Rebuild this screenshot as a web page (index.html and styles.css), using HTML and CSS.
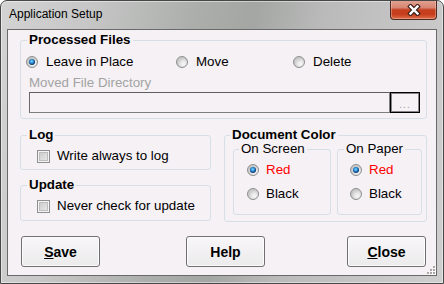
FILE: index.html
```html
<!DOCTYPE html>
<html>
<head>
<meta charset="utf-8">
<link rel="stylesheet" href="styles.css">
</head>
<body>
<div class="window">
  <div class="titlebar">
    <span class="title">Application Setup</span>
    <div class="close-btn">
      <svg width="14" height="12" viewBox="0 0 14 12">
        <path d="M3.5 2.5 L10.5 9.5 M10.5 2.5 L3.5 9.5" stroke="#3b1f1a" stroke-width="4.6" stroke-linecap="square"/>
        <path d="M3.5 2.5 L10.5 9.5 M10.5 2.5 L3.5 9.5" stroke="#ffffff" stroke-width="2.4" stroke-linecap="square"/>
      </svg>
    </div>
  </div>
  <div class="client">
    <fieldset class="group processed">
      <legend>Processed Files</legend>
      <div class="pf-body">
        <div class="radio-row">
          <div class="opt opt-leave"><span class="radio checked"></span><span>Leave in Place</span></div>
          <div class="opt opt-move"><span class="radio"></span><span>Move</span></div>
          <div class="opt"><span class="radio"></span><span>Delete</span></div>
        </div>
        <div class="dir-label">Moved File Directory</div>
        <div class="dir-row">
          <div class="dir-input"></div>
          <div class="dir-btn"><span class="dots">...</span></div>
        </div>
      </div>
    </fieldset>

    <div class="columns">
      <div class="left-col">
        <fieldset class="group log">
          <legend>Log</legend>
          <div class="check-body">
            <div class="opt"><span class="checkbox"></span><span>Write always to log</span></div>
          </div>
        </fieldset>
        <fieldset class="group update">
          <legend>Update</legend>
          <div class="check-body update-body">
            <div class="opt"><span class="checkbox"></span><span>Never check for update</span></div>
          </div>
        </fieldset>
      </div>

      <fieldset class="group doc">
        <legend>Document Color</legend>
        <div class="doc-body">
          <fieldset class="group sub sub-screen">
            <legend>On Screen</legend>
            <div class="sub-body">
              <div class="opt"><span class="radio checked"></span><span class="red">Red</span></div>
              <div class="opt"><span class="radio"></span><span>Black</span></div>
            </div>
          </fieldset>
          <fieldset class="group sub sub-paper">
            <legend>On Paper</legend>
            <div class="sub-body">
              <div class="opt"><span class="radio checked"></span><span class="red">Red</span></div>
              <div class="opt"><span class="radio"></span><span>Black</span></div>
            </div>
          </fieldset>
        </div>
      </fieldset>
    </div>

    <div class="buttons">
      <div class="btn btn-save"><span><u>S</u>ave</span></div>
      <div class="btn btn-help"><span>Help</span></div>
      <div class="btn btn-close"><span><u>C</u>lose</span></div>
    </div>

    <svg class="grip" width="10" height="10" viewBox="0 0 10 10">
      <g fill="#ffffff">
        <rect x="8" y="2" width="2" height="2"/><rect x="5" y="5" width="2" height="2"/><rect x="8" y="5" width="2" height="2"/>
        <rect x="2" y="8" width="2" height="2"/><rect x="5" y="8" width="2" height="2"/><rect x="8" y="8" width="2" height="2"/>
      </g>
      <g fill="#a8a8a8">
        <rect x="7" y="1" width="2" height="2"/><rect x="4" y="4" width="2" height="2"/><rect x="7" y="4" width="2" height="2"/>
        <rect x="1" y="7" width="2" height="2"/><rect x="4" y="7" width="2" height="2"/><rect x="7" y="7" width="2" height="2"/>
      </g>
    </svg>
  </div>
</div>
</body>
</html>
```

FILE: styles.css
```css
html, body {
  margin: 0;
  padding: 0;
  background: #ffffff;
}

body {
  font-family: "Liberation Sans", Arial, sans-serif;
  font-size: 13.33px;
  color: #000;
}

.window {
  width: 444px;
  height: 284px;
  box-sizing: border-box;
  border: 1px solid #474747;
  border-radius: 7px 7px 0 0;
  display: flex;
  flex-direction: column;
  background: linear-gradient(100deg, #d3d3d3 0%, #c6c7c6 18%, #acaeac 40%, #a4a6a4 52%, #b9bab9 66%, #c2c3c2 80%, #cfcfcf 100%);
  box-shadow: inset 0 0 0 1px rgba(255, 255, 255, 0.45);
  overflow: hidden;
}

.titlebar {
  height: 28px;
  flex: none;
  display: flex;
  align-items: flex-start;
}

.title {
  font-size: 12px;
  line-height: 14px;
  padding: 6px 0 0 8px;
  color: #000;
}

.close-btn {
  margin-left: auto;
  margin-right: 6px;
  margin-top: -1px;
  width: 47px;
  height: 20px;
  box-sizing: border-box;
  border: 1px solid #4f2a22;
  border-top: none;
  border-radius: 0 0 4px 4px;
  background: linear-gradient(#e2a494 0%, #d78572 40%, #c5401f 52%, #c63d1c 75%, #dc6f4a 100%);
  box-shadow: inset 0 0 0 1px rgba(255, 220, 210, 0.35);
  display: flex;
  align-items: center;
  justify-content: center;
}

.client {
  position: relative;
  flex: 1;
  margin: 0 6px 7px 6px;
  border: 1px solid #6a6a6a;
  background: #f5f1f5;
  display: flex;
  flex-direction: column;
}

/* group boxes */
.group {
  margin: 0;
  padding: 0;
  border: 1px solid #d5dfe5;
  border-radius: 3px;
  min-width: 0;
  box-sizing: border-box;
}

.group > legend {
  padding: 0 2px;
  margin-left: 6px;
  font-weight: bold;
  font-size: 13.33px;
  line-height: 14px;
}

.processed {
  margin: 3px 9px 0 12px;
}

.pf-body {
  padding: 7px 0 5px 0;
}

.opt {
  display: flex;
  align-items: center;
  height: 16px;
  line-height: 16px;
  white-space: nowrap;
}

.radio-row {
  display: flex;
  padding-left: 5px;
}

.opt-leave { width: 150px; }
.opt-move { width: 117px; }

.radio {
  flex: none;
  width: 12px;
  height: 12px;
  box-sizing: border-box;
  border-radius: 50%;
  border: 1px solid #8c8e8e;
  background: radial-gradient(circle at 65% 70%, #f8f8f8 0, #e6e6e6 3px, #c9c9c9 6px);
  margin-right: 8px;
  position: relative;
}

.radio.checked::after {
  content: "";
  position: absolute;
  left: 2px;
  top: 2px;
  width: 6px;
  height: 6px;
  border-radius: 50%;
  background: radial-gradient(circle at 45% 40%, #8fdcff 0, #2f9ae0 1.5px, #1a5fa3 2.6px, #103c70 3px);
}

.checkbox {
  flex: none;
  width: 13px;
  height: 13px;
  box-sizing: border-box;
  border: 1px solid #8e8f8f;
  background: linear-gradient(135deg, #c6c6c6, #eeeeee);
  box-shadow: inset 0 0 0 1px #f4f4f4, inset 0 0 0 2px #bdbdbd;
  margin-right: 7px;
}

.dir-label {
  margin-top: 5px;
  padding-left: 8px;
  line-height: 16px;
  color: #a3a3a3;
}

.dir-row {
  margin-top: 1px;
  padding-left: 8px;
  display: flex;
  height: 21px;
}

.dir-input {
  width: 361px;
  height: 21px;
  box-sizing: border-box;
  border: 1px solid #7f7f7f;
  border-top-color: #5e5e5e;
  border-left-color: #6a6a6a;
  background: #f5f1f5;
}

.dir-btn {
  width: 30px;
  height: 21px;
  box-sizing: border-box;
  border: 1px solid #000;
  box-shadow: inset 0 0 0 1px rgba(0, 0, 0, 0.45);
  display: flex;
  justify-content: center;
  align-items: flex-end;
}

.dots {
  font-size: 10px;
  line-height: 10px;
  color: #a0a0a0;
  letter-spacing: 1px;
  padding-bottom: 2px;
}

/* lower columns */
.columns {
  display: flex;
  margin-top: 9px;
  padding-left: 12px;
}

.left-col {
  width: 191px;
  display: flex;
  flex-direction: column;
}

.check-body {
  padding: 6px 0 5px 16px;
}

.update {
  margin-top: 8px;
}

.update-body {
  padding-bottom: 6px;
}

.doc {
  width: 203px;
  margin-left: 13px;
}

.doc > legend {
  margin-left: 5px;
}

.doc-body {
  display: flex;
  padding: 0 0 6px 8px;
}

.sub > legend {
  font-weight: normal;
  margin-left: 5px;
}

.sub-screen { width: 98px; }
.sub-paper { width: 85px; margin-left: 6px; }
.sub-paper > legend { margin-left: 6px; }

.sub-body {
  padding: 6px 0 12px 13px;
  display: flex;
  flex-direction: column;
  gap: 8px;
}

.sub-paper .sub-body {
  padding-left: 12px;
}

.sub-body .radio {
  margin-right: 7px;
}

.red {
  color: #ff0000;
}

/* buttons */
.buttons {
  display: flex;
  margin-top: 14px;
  padding-left: 13px;
}

.btn {
  width: 79px;
  height: 31px;
  box-sizing: border-box;
  border: 1px solid #707070;
  border-radius: 3px;
  background: linear-gradient(#f8f6f8, #ecebec);
  box-shadow: inset 0 0 0 1px #fcfcfc;
  display: flex;
  align-items: center;
  justify-content: center;
  font-weight: bold;
  font-size: 14px;
  line-height: 16px;
}

.btn-help { margin-left: 86px; }
.btn-close { margin-left: 82px; }

.grip {
  position: absolute;
  right: 0;
  bottom: 0;
}
```
